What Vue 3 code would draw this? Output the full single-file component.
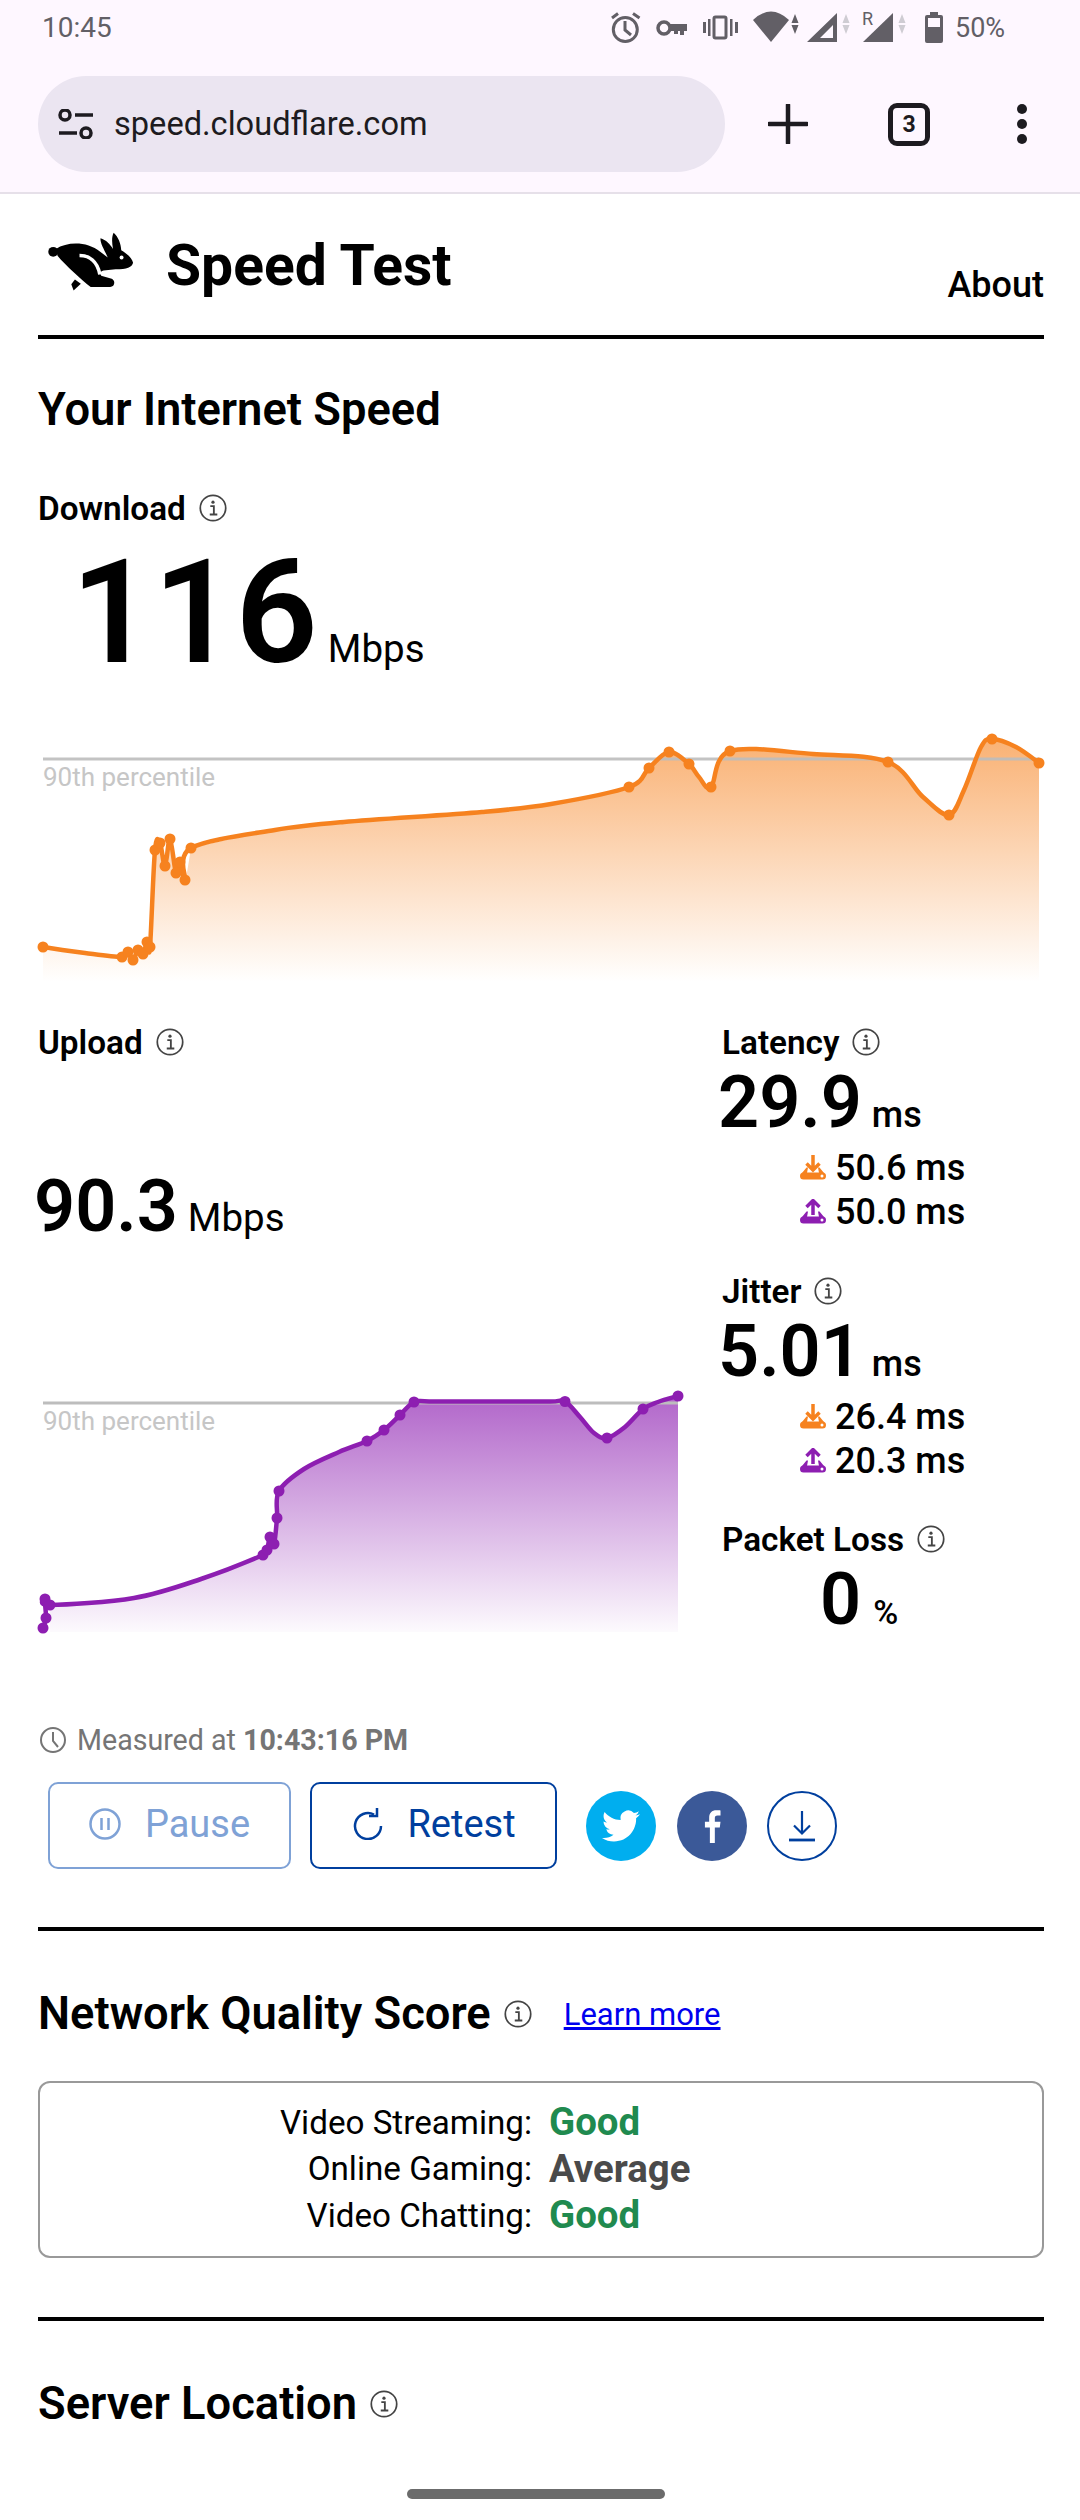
<script setup>
const curve = (pts) => {
  let d = `M${pts[0][0]} ${pts[0][1]}`
  for (let i = 0; i < pts.length - 1; i++) {
    const p0 = pts[Math.max(i - 1, 0)], p1 = pts[i], p2 = pts[i + 1], p3 = pts[Math.min(i + 2, pts.length - 1)]
    const t = 6
    const c1x = p1[0] + (p2[0] - p0[0]) / t, c1y = p1[1] + (p2[1] - p0[1]) / t
    const c2x = p2[0] - (p3[0] - p1[0]) / t, c2y = p2[1] - (p3[1] - p1[1]) / t
    d += `C${c1x.toFixed(1)} ${c1y.toFixed(1)} ${c2x.toFixed(1)} ${c2y.toFixed(1)} ${p2[0]} ${p2[1]}`
  }
  return d
}
// third value 1 = measured point (gets a dot); others only shape the curve
const dl = [[43,947,1],[85,953],[122,957,1],[128,952,1],[133,960,1],[138,950,1],[143,954,1],[147,942,1],[150,947,1],[155,850,1],[160,843,1],[165,866,1],[170,839,1],[176,873,1],[180,862,1],[185,880,1],[191,848,1],[275,830],[344,822],[482,812],[551,804],[629,787,1],[649,768,1],[669,752,1],[689,764,1],[699,777],[711,787,1],[730,751,1],[813,754],[888,762,1],[923,797],[949,815,1],[964,790],[981,747],[992,739,1],[1016,747],[1039,763,1]]
const ul = [[43,1628,1],[46,1618,1],[45,1599,1],[50,1605,1],[134,1598],[201,1579],[263,1555,1],[267,1550,1],[270,1537,1],[274,1544,1],[277,1518,1],[279,1491,1],[304,1469],[339,1452],[367,1441,1],[384,1430,1],[400,1415,1],[414,1402,1],[430,1401.5],[490,1401.5],[550,1401.5],[565,1401.5,1],[580,1417],[594,1433],[607,1438,1],[625,1427],[643,1409,1],[658,1402],[678,1396,1]]
const charts = {
  dl: { line: curve(dl), area: curve(dl.slice(16)) + 'L1039 985L191 985Z', areaLow: curve(dl.slice(0, 17)) + 'L191 985L43 985Z', dots: dl.filter(p => p[2]) },
  ul: { line: curve(ul), area: curve(ul.slice(3)) + 'L678 1632L50 1632Z', dots: ul.filter(p => p[2]) },
}
const scores = [
  { label: 'Video Streaming:', value: 'Good', cls: 'good' },
  { label: 'Online Gaming:', value: 'Average', cls: 'avg' },
  { label: 'Video Chatting:', value: 'Good', cls: 'good' },
]
const latency = [
  { dir: 'down', text: '50.6 ms' },
  { dir: 'up', text: '50.0 ms' },
]
const jitter = [
  { dir: 'down', text: '26.4 ms' },
  { dir: 'up', text: '20.3 ms' },
]
</script>

<template>
  <div class="app">
    <svg class="defs" width="0" height="0" aria-hidden="true">
      <symbol id="info" viewBox="0 0 26 26">
        <circle cx="13" cy="13" r="11.800" fill="none" stroke="#444" stroke-width="1.600" />
        <circle cx="13" cy="7.600" r="1.500" fill="#444" />
        <path d="M10.500 11.200H13.800V18.600M10 19H17" fill="none" stroke="#444" stroke-width="1.700" />
      </symbol>
      <symbol id="tray" viewBox="0 0 26 26">
        <path d="M0 21a3.500 3.500 0 0 1 3.500-3.500h19a3.500 3.500 0 0 1 0 7h-19A3.500 3.500 0 0 1 0 21Z" fill="currentColor" />
        <circle cx="22" cy="21" r="1.500" fill="#fff" />
        <path d="M2 18L6.500 12.500H8L7 18ZM24 18L19.500 12.500H18L19 18Z" fill="currentColor" />
      </symbol>
      <linearGradient id="gradOrange" gradientUnits="userSpaceOnUse" x1="0" y1="739" x2="0" y2="982">
        <stop offset="0" stop-color="#f6821f" stop-opacity=".62" />
        <stop offset="1" stop-color="#f6821f" stop-opacity="0" />
      </linearGradient>
      <linearGradient id="gradPurple" gradientUnits="userSpaceOnUse" x1="0" y1="1396" x2="0" y2="1640">
        <stop offset="0" stop-color="#8d1eb1" stop-opacity=".68" />
        <stop offset="1" stop-color="#8d1eb1" stop-opacity="0" />
      </linearGradient>
    </svg>

    <header class="chrome">
      <div class="status">
        <span class="time">10:45</span>
        <svg class="status-icons" width="520" height="50" viewBox="0 0 520 50">
          <g fill="none" stroke="#625f66" stroke-width="3">
            <circle cx="65.300" cy="29.500" r="12" />
            <path d="M65 21V30L71 35M52 18L58 13.500M73 13.500L79.500 18" />
            <circle cx="104" cy="28" r="6" stroke-width="3.500" />
            <rect x="154" y="17" width="12" height="21" rx="1.500" />
          </g>
          <path d="M110 24H127V31H124V35H120V31H118V34H114V31H110Z" fill="#625f66" />
          <path d="M143 22h3v11h-3ZM148 19h2.500v17H148ZM170 19h2.500v17H170ZM175 22h3v11h-3Z" fill="#625f66" />
          <path d="M193 20Q211 3 229 20L211 42Z" fill="#625f66" />
          <path d="M235 14L231.500 23H238.500ZM235 34L231.500 25H238.500Z" fill="#625f66" />
          <path fill-rule="evenodd" d="M247 42L277 13V42ZM260 38H273V25Z" fill="#625f66" />
          <path d="M286 14L282.500 23H289.500ZM286 34L282.500 25H289.500Z" fill="#cfccd3" />
          <text x="302" y="25" class="st-r">R</text>
          <path d="M303 42L333 13V42Z" fill="#625f66" />
          <path d="M342 14L338.500 23H345.500ZM342 34L338.500 25H345.500Z" fill="#cfccd3" />
          <path fill-rule="evenodd" d="M370 12H378V15H381Q383 15 383 17V41Q383 43 381 43H367Q365 43 365 41V17Q365 15 367 15H370ZM368 18V27H380V18Z" fill="#625f66" />
          <text x="395" y="37" class="st-pct">50%</text>
        </svg>
      </div>
      <div class="toolbar">
        <div class="pill">
          <svg width="36" height="30" viewBox="0 0 36 30" fill="none" stroke="#1d1b20" stroke-width="3.500">
            <circle cx="7" cy="6" r="5" />
            <path d="M17 6H35M1 24H19" />
            <circle cx="28" cy="24" r="5" />
          </svg>
          <span class="url">speed.cloudflare.com</span>
        </div>
        <svg class="plus" width="40" height="40" viewBox="0 0 40 40">
          <path d="M20 1V39M1 20H39" stroke="#1d1b20" stroke-width="4.500" stroke-linecap="round" />
        </svg>
        <div class="tabs">3</div>
        <svg class="menu" width="12" height="42" viewBox="0 0 12 42" fill="#1d1b20">
          <circle cx="6" cy="6" r="5" /><circle cx="6" cy="21" r="5" /><circle cx="6" cy="36" r="5" />
        </svg>
      </div>
    </header>

    <main class="page">
      <div class="brand">
        <div class="brand-left">
          <svg class="rabbit" width="92" height="66" viewBox="50 50 280 200">
            <circle cx="72" cy="113" r="15" />
            <path d="M80 104C115 82 175 80 215 113L238 130C226 105 214 85 216 72C232 76 246 92 254 104C250 85 250 65 256 55C270 68 278 88 279 108C296 118 312 132 315 146C312 160 296 166 262 166L225 170C216 172 214 178 218 186L250 195C262 200 260 220 245 220H186C160 200 110 155 85 125Z" />
            <path d="M152 124C180 124 206 140 214 182" fill="none" stroke="#fff" stroke-width="11" />
            <circle cx="280" cy="130" r="6" fill="#fff" />
            <path d="M138 197L156 210L134 231L127 212Z" />
          </svg>
          <h1>Speed Test</h1>
        </div>
        <span class="about">About</span>
      </div>

      <h2 class="h-first">Your Internet Speed</h2>

      <div class="label lbl-dl">Download <svg class="info"><use href="#info" /></svg></div>
      <div class="big">116<span class="big-unit">Mbps</span></div>
      <svg class="chart chart-dl" width="1006" height="240" viewBox="38 745 1006 240">
        <path :d="charts.dl.areaLow" fill="url(#gradOrange)" />
        <path :d="charts.dl.area" fill="url(#gradOrange)" />
        <path d="M43 759H1039" stroke="#bdbdbd" stroke-width="3" opacity=".9" />
        <text x="43" y="786" class="pct">90th percentile</text>
        <path :d="charts.dl.line" fill="none" stroke="#f6821f" stroke-width="4.500" />
        <circle v-for="(p, i) in charts.dl.dots" :key="i" :cx="p[0]" :cy="p[1]" r="5.500" fill="#f6821f" />
      </svg>

      <div class="metrics">
        <div class="col-left">
          <div class="label">Upload <svg class="info"><use href="#info" /></svg></div>
          <div class="mid up-val">90.3<span class="mid-unit">Mbps</span></div>
          <svg class="chart chart-ul" width="684" height="245" viewBox="38 1390 684 245">
            <path :d="charts.ul.area" fill="url(#gradPurple)" />
            <path d="M43 1403H678" stroke="#bdbdbd" stroke-width="3" />
            <text x="43" y="1430" class="pct">90th percentile</text>
            <path :d="charts.ul.line" fill="none" stroke="#8d1eb1" stroke-width="4.500" />
            <circle v-for="(p, i) in charts.ul.dots" :key="i" :cx="p[0]" :cy="p[1]" r="5.500" fill="#8d1eb1" />
          </svg>
        </div>
        <div class="col-right">
          <div class="label">Latency <svg class="info"><use href="#info" /></svg></div>
          <div class="mid stat">29.9<span class="ms">ms</span></div>
          <div class="subs">
            <div v-for="s in latency" :key="s.text" class="sub">
              <svg class="dir" :class="s.dir" width="26" height="26" viewBox="0 0 26 26">
                <use href="#tray" />
                <path v-if="s.dir === 'down'" d="M13 0V13M6.500 8.500L13 15L19.500 8.500" fill="none" stroke="currentColor" stroke-width="3.500" />
                <path v-else d="M13 16V3M6.500 8L13 1.500L19.500 8" fill="none" stroke="currentColor" stroke-width="3.500" />
              </svg>
              <span>{{ s.text }}</span>
            </div>
          </div>
          <div class="label gap-a">Jitter <svg class="info"><use href="#info" /></svg></div>
          <div class="mid stat">5.01<span class="ms">ms</span></div>
          <div class="subs">
            <div v-for="s in jitter" :key="s.text" class="sub">
              <svg class="dir" :class="s.dir" width="26" height="26" viewBox="0 0 26 26">
                <use href="#tray" />
                <path v-if="s.dir === 'down'" d="M13 0V13M6.500 8.500L13 15L19.500 8.500" fill="none" stroke="currentColor" stroke-width="3.500" />
                <path v-else d="M13 16V3M6.500 8L13 1.500L19.500 8" fill="none" stroke="currentColor" stroke-width="3.500" />
              </svg>
              <span>{{ s.text }}</span>
            </div>
          </div>
          <div class="label gap-b">Packet Loss <svg class="info"><use href="#info" /></svg></div>
          <div class="mid stat zero">0<span class="pc">%</span></div>
        </div>
      </div>

      <div class="measured">
        <svg width="26" height="26" viewBox="0 0 26 26" fill="none" stroke="#757575" stroke-width="2">
          <circle cx="13" cy="13" r="12" />
          <path d="M13 5V14L18 20" />
        </svg>
        <span>Measured at <b>10:43:16 PM</b></span>
      </div>

      <div class="actions">
        <button class="btn pause">
          <svg width="32" height="32" viewBox="0 0 32 32" fill="none" stroke="currentColor" stroke-width="2.500">
            <circle cx="16" cy="16" r="14.500" />
            <path d="M12.500 10V22M19.500 10V22" />
          </svg>
          <span>Pause</span>
        </button>
        <button class="btn retest">
          <svg width="30" height="32" viewBox="0 0 30 32" fill="none" stroke="currentColor" stroke-width="2.500">
            <path d="M21 6.500A13 13 0 1 0 28 18" />
            <path d="M22 0V8H14" transform="translate(2 0)" />
          </svg>
          <span>Retest</span>
        </button>
        <div class="round tw">
          <svg width="38" height="38" viewBox="0 0 24 24" fill="#fff"><path d="M23.953 4.570a10 10 0 0 1-2.825.775 4.958 4.958 0 0 0 2.163-2.723c-.951.555-2.005.959-3.127 1.184a4.920 4.920 0 0 0-8.384 4.482C7.690 8.095 4.067 6.130 1.640 3.162a4.822 4.822 0 0 0-.666 2.475c0 1.710.870 3.213 2.188 4.096a4.904 4.904 0 0 1-2.228-.616v.060a4.923 4.923 0 0 0 3.946 4.827 4.996 4.996 0 0 1-2.212.085 4.936 4.936 0 0 0 4.604 3.417 9.867 9.867 0 0 1-6.102 2.105c-.390 0-.779-.023-1.170-.067a13.995 13.995 0 0 0 7.557 2.209c9.053 0 13.998-7.496 13.998-13.985 0-.210 0-.420-.015-.630A9.935 9.935 0 0 0 24 4.590z" /></svg>
        </div>
        <div class="round fb">
          <svg width="34" height="34" viewBox="0 0 24 24" fill="#fff"><path d="M14 24V13h3.500l.5-4h-4V6.500c0-1.200.3-2 2-2h2V1c-.4 0-1.600-.1-3-.1-3 0-5 1.800-5 5.200V9H7v4h3.500v11z" /></svg>
        </div>
        <div class="round dlb">
          <svg width="30" height="32" viewBox="0 0 30 32" fill="none" stroke="#003f9e" stroke-width="2.200">
            <path d="M15 1V23M7 15.500L15 23.500L23 15.500" />
            <path d="M2 30H28" stroke-width="2.800" />
          </svg>
        </div>
      </div>

      <hr class="rule r1" />

      <div class="h-row nq">
        <h2>Network Quality Score</h2>
        <svg class="info"><use href="#info" /></svg>
        <a class="learn" href="#">Learn more</a>
      </div>

      <div class="score-box">
        <template v-for="s in scores" :key="s.label">
          <span class="sc-label">{{ s.label }}</span>
          <span class="sc-value" :class="s.cls">{{ s.value }}</span>
        </template>
      </div>

      <hr class="rule r2" />

      <div class="h-row sl">
        <h2>Server Location</h2>
        <svg class="info"><use href="#info" /></svg>
      </div>
    </main>

    <div class="home"></div>
  </div>
</template>

<style scoped>
.app { position: relative; width: 1080px; height: 2520px; overflow: hidden; background: #fff; font-family: Roboto, "Liberation Sans", sans-serif; color: #000; }
.defs { position: absolute; }
.chrome { background: #fef7ff; height: 192px; border-bottom: 2px solid #e6e0e9; }
.status { display: flex; justify-content: space-between; height: 76px; padding-left: 42px; }
.time { font-size: 28px; line-height: 56px; color: #625f66; }
.status-icons { display: block; }
.st-r { font-size: 18px; fill: #625f66; font-family: Roboto, sans-serif; }
.st-pct { font-size: 27px; fill: #625f66; font-family: Roboto, sans-serif; }
.toolbar { display: flex; align-items: center; height: 96px; padding-left: 38px; }
.pill { width: 687px; height: 96px; border-radius: 48px; background: #ebe5f1; display: flex; align-items: center; padding-left: 20px; box-sizing: border-box; }
.url { font-size: 32.6px; color: #1d1b20; margin-left: 20px; }
.plus { margin-left: 43px; }
.tabs { margin-left: 80px; width: 42px; height: 43px; box-sizing: border-box; border: 5px solid #1d1b20; border-radius: 9px; display: flex; align-items: center; justify-content: center; font-size: 23px; font-weight: 700; color: #1d1b20; }
.menu { margin-left: 86px; }
.page { padding: 0 36px 0 38px; }
.brand { height: 141px; border-bottom: 4px solid #000; display: flex; justify-content: space-between; align-items: flex-start; }
.brand-left { display: flex; align-items: center; margin-top: 38px; }
.rabbit { margin-left: 8px; margin-top: -2px; }
h1 { margin: 2px 0 0 28px; font-size: 57px; line-height: 64px; font-weight: 700; }
.about { font-size: 36px; font-weight: 500; margin-top: 67px; line-height: 48px; }
h2 { margin: 0; font-size: 45.3px; line-height: 56px; font-weight: 600; }
.h-first { margin-top: 43px; }
.label { display: flex; align-items: center; gap: 13px; height: 40px; font-size: 33.3px; font-weight: 600; }
.lbl-dl { margin-top: 50px; }
.info { width: 28px; height: 28px; flex: none; }
.big { margin-top: 15px; margin-bottom: -2px; padding-left: 33px; font-size: 144px; line-height: 140px; font-weight: 600; }
.big-unit { font-size: 38.5px; font-weight: 400; margin-left: 10px; line-height: 1; }
.chart { display: block; overflow: visible; }
.chart-dl { margin-top: 64px; }
.chart-ul { margin-top: 147px; }
.pct { font-size: 26px; fill: #c6c6c6; font-family: Roboto, sans-serif; }
.metrics { display: grid; grid-template-columns: 684px 1fr; margin-top: 37px; }
.mid { font-size: 72px; line-height: 72px; font-weight: 600; }
.up-val { margin-top: 109px; margin-left: -4px; }
.mid-unit { font-size: 38.5px; font-weight: 400; margin-left: 10px; line-height: 1; }
.stat { margin-top: 5px; margin-bottom: -1px; margin-left: -4px; }
.ms { font-size: 36px; font-weight: 500; margin-left: 10px; line-height: 1; }
.pc { font-size: 34px; font-weight: 500; margin-left: 12px; line-height: 1; }
.zero { padding-left: 102px; }
.subs { margin-top: 8px; padding-left: 78px; }
.sub { display: flex; align-items: center; gap: 9px; height: 44px; font-size: 36px; font-weight: 500; }
.dir { flex: none; }
.dir.down { color: #f6821f; }
.dir.up { color: #8d1eb1; }
.gap-a { margin-top: 37px; }
.gap-b { margin-top: 36px; }
.measured { display: flex; align-items: center; gap: 11px; margin: 87px 0 0 2px; height: 36px; font-size: 28.6px; color: #757575; }
.measured b { font-weight: 700; }
.actions { display: flex; align-items: center; margin: 24px 0 0 10px; }
.btn { box-sizing: border-box; height: 87px; border-radius: 10px; background: #fff; border: 2px solid; display: flex; align-items: center; justify-content: center; gap: 24px; font: 400 38px Roboto, sans-serif; padding: 0 0 3px; }
.pause { width: 243px; color: #7fa2d6; border-color: #7fa2d6; }
.retest { width: 247px; margin-left: 19px; padding-left: 2px; color: #003f9e; border-color: #003f9e; }
.round { box-sizing: border-box; width: 70px; height: 70px; border-radius: 50%; display: flex; align-items: center; justify-content: center; }
.tw { background: #00aeef; margin-left: 29px; }
.fb { background: #3b5998; margin-left: 21px; }
.dlb { border: 2px solid #003f9e; margin-left: 20px; }
.rule { border: 0; height: 4px; background: #000; margin: 0; }
.r1 { margin-top: 58px; }
.r2 { margin-top: 59px; }
.h-row { display: flex; align-items: center; }
.h-row .info { margin-left: 13px; }
.nq { margin-top: 55px; }
.sl { margin-top: 55px; }
.learn { margin-left: 32px; font-size: 31px; color: #0000ee; text-decoration: underline; }
.score-box { box-sizing: border-box; margin-top: 39px; height: 177px; border: 2px solid #999; border-radius: 12px; padding-top: 16px; display: grid; grid-template-columns: 492px 1fr; column-gap: 17px; grid-auto-rows: 46.5px; align-items: center; font-size: 33.2px; }
.sc-label { text-align: right; }
.sc-value { font-weight: 700; font-size: 38.400px; line-height: 46px; }
.good { color: #208a4f; }
.avg { color: #4a4a4a; }
.home { position: absolute; left: 407px; top: 2489px; width: 258px; height: 10px; border-radius: 5px; background: #6b6b6b; }
</style>
